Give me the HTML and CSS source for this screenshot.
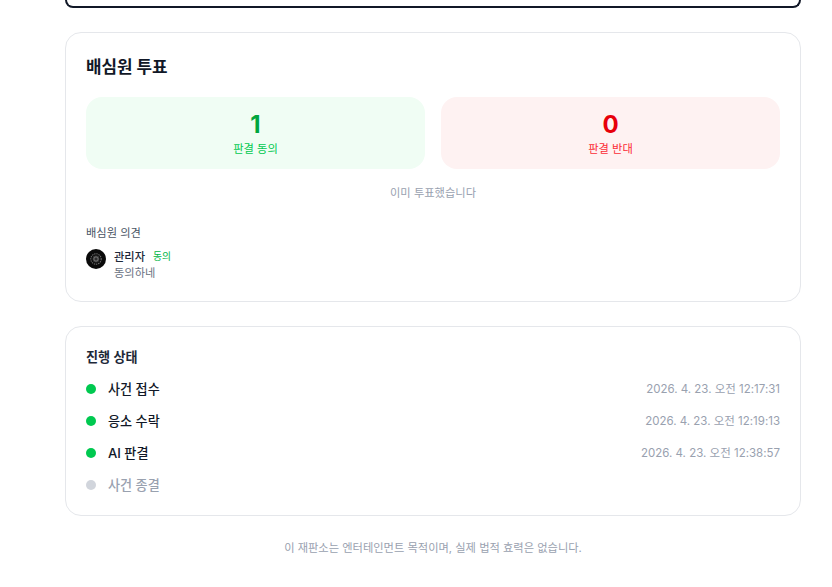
FILE: index.html
```html
<!DOCTYPE html>
<html lang="ko">
<head>
<meta charset="utf-8">
<title>배심원 투표</title>
<link rel="stylesheet" href="styles.css">
</head>
<body>
<main class="page">
  <div class="top-card"></div>
  <section class="card jury">
    <h2 class="jury-title">배심원 투표</h2>
    <div class="votes">
      <div class="vote vote-agree">
        <div class="vote-num">1</div>
        <div class="vote-label">판결 동의</div>
      </div>
      <div class="vote vote-disagree">
        <div class="vote-num">0</div>
        <div class="vote-label">판결 반대</div>
      </div>
    </div>
    <p class="voted">이미 투표했습니다</p>
    <h3 class="opinions-title">배심원 의견</h3>
    <div class="opinion">
      <svg class="avatar" viewBox="0 0 20 20" aria-hidden="true">
        <circle cx="10" cy="10" r="10" fill="#0a0a0a"/>
        <circle cx="10" cy="10" r="5.2" fill="none" stroke="#6b6b6b" stroke-width="1.1" stroke-dasharray="1.4 .8"/>
        <circle cx="10" cy="10" r="3.4" fill="#3c3c3c"/>
        <path d="M10 7v6M7 10h6M7.9 7.9l4.2 4.2M12.1 7.9l-4.2 4.2" stroke="#8a8a8a" stroke-width=".6"/>
        <circle cx="10" cy="10" r="1.1" fill="#1a1a1a"/>
      </svg>
      <div class="opinion-body">
        <div class="opinion-head"><span class="opinion-name">관리자</span><span class="opinion-tag">동의</span></div>
        <div class="opinion-text">동의하네</div>
      </div>
    </div>
  </section>
  <section class="card status">
    <h3 class="status-title">진행 상태</h3>
    <ul class="steps">
      <li class="step done"><span class="dot"></span><span class="step-name">사건 접수</span><span class="step-time">2026. 4. 23. 오전 12:17:31</span></li>
      <li class="step done"><span class="dot"></span><span class="step-name">응소 수락</span><span class="step-time">2026. 4. 23. 오전 12:19:13</span></li>
      <li class="step done"><span class="dot"></span><span class="step-name">AI 판결</span><span class="step-time">2026. 4. 23. 오전 12:38:57</span></li>
      <li class="step"><span class="dot"></span><span class="step-name">사건 종결</span></li>
    </ul>
  </section>
  <p class="footer-note">이 재판소는 엔터테인먼트 목적이며, 실제 법적 효력은 없습니다.</p>
</main>
</body>
</html>
```
FILE: styles.css
```css
* { box-sizing: border-box; }
html, body { margin: 0; padding: 0; background: #fff; overflow: hidden; }
body {
  height: 587px;
  font-family: Inter, "Noto Sans CJK KR", "Noto Sans", sans-serif;
  color: #111827;
}
.page { width: 736px; margin-left: 65px; }
.top-card {
  height: 8px;
  border: 2px solid #111827;
  border-top: 0;
  border-radius: 0 0 12px 12px;
  margin-bottom: 24px;
}
.card {
  background: #fff;
  border: 1px solid #e5e7eb;
  border-radius: 16px;
  padding: 20px;
}
.jury { height: 270px; margin-bottom: 24px; }
.jury-title { margin: 0 0 16px; font-size: 16.875px; line-height: 28px; font-weight: 700; height: 28px; }
.votes { display: grid; grid-template-columns: 1fr 1fr; gap: 16px; }
.vote { height: 72px; border-radius: 16px; padding: 12px 0; text-align: center; }
.vote-agree { background: #f0fdf4; color: #00a63e; }
.vote-disagree { background: #fef2f2; color: #e7000b; }
.vote-num { font-size: 24px; line-height: 32px; font-weight: 700; }
.vote-label { font-size: 11.25px; line-height: 16px; }
.vote-agree .vote-label { color: #00c950; }
.vote-disagree .vote-label { color: #fb2c36; }
.voted { margin: 16px 0 0; text-align: center; font-size: 11.25px; line-height: 16px; color: #99a1af; }
.opinions-title { margin: 24px 0 8px; font-size: 11.25px; line-height: 16px; font-weight: 400; color: #4a5565; }
.opinion { display: flex; gap: 8px; }
.avatar { width: 20px; height: 20px; flex: none; }
.opinion-head { display: flex; align-items: center; gap: 8px; height: 16px; }
.opinion-name { font-size: 11.25px; line-height: 16px; font-weight: 500; color: #1e2939; }
.opinion-tag { font-size: 9.75px; line-height: 14px; color: #00b545; }
.opinion-text { font-size: 11.25px; line-height: 16px; color: #6a7282; }
.status { height: 190px; }
.status-title { margin: 0 0 12px; font-size: 13.125px; line-height: 20px; font-weight: 600; color: #1e2939; height: 20px; }
.steps { list-style: none; margin: 0; padding: 0; display: flex; flex-direction: column; gap: 12px; }
.step { display: flex; align-items: center; gap: 12px; height: 20px; }
.dot { width: 10px; height: 10px; border-radius: 50%; background: #d1d5dc; flex: none; }
.done .dot { background: #00c950; }
.step-name { flex: 1; font-size: 13.125px; line-height: 20px; font-weight: 500; color: #99a1af; }
.done .step-name { color: #111827; }
.step-time { font-size: 11.5px; line-height: 16px; color: #99a1af; }
.footer-note { margin: 24px 0 0; text-align: center; font-size: 11.25px; line-height: 16px; color: #99a1af; }
```
